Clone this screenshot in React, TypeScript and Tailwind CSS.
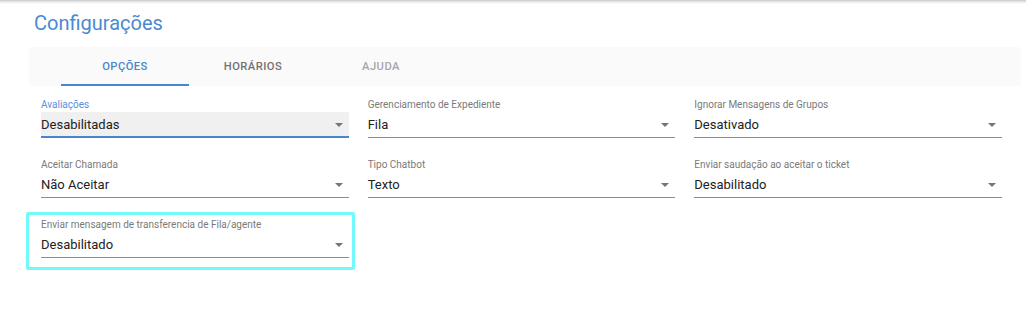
import React from "react";

type FieldProps = {
  label: string;
  value: string;
  focused?: boolean;
  highlighted?: boolean;
};

function Arrow() {
  return (
    <svg width="8" height="4" viewBox="0 0 8 4" className="shrink-0">
      <path d="M0 0 L8 0 L4 4 Z" fill="#757575" />
    </svg>
  );
}

function Field({ label, value, focused, highlighted }: FieldProps) {
  return (
    <div className="relative flex flex-col">
      {highlighted && (
        <div className="absolute -left-[15px] -right-[6px] -top-[7px] -bottom-[12px] border-[3px] border-[#72fafa] rounded-[2px] pointer-events-none" />
      )}
      <div
        className={
          "text-[10px] leading-[12px] " +
          (focused ? "text-[#5b8fdc]" : "text-[#7a7a7a]")
        }
      >
        {label}
      </div>
      <div
        className={
          "mt-[1px] h-[25px] flex items-center justify-between pr-[6px] " +
          (focused ? "bg-[#f0f0f0]" : "")
        }
      >
        <span className="text-[13px] text-[#222222] leading-[16px]">{value}</span>
        <Arrow />
      </div>
      {focused ? (
        <div className="h-[2px] -mt-[1px] bg-[#4a86cf]" />
      ) : (
        <div className="h-[1px] bg-[#8c8c8c]" />
      )}
    </div>
  );
}

export default function App() {
  return (
    <div
      className="relative w-full h-[333px] bg-white overflow-hidden"
      style={{ fontFamily: "Roboto, 'Noto Sans', sans-serif" }}
    >
      <div className="absolute top-0 left-0 right-0 h-[4px] bg-gradient-to-b from-[#c8c8c8] via-[#ececec] to-white" />
      <div className="pt-[11px] pl-[34px] text-[20px] leading-[24px] text-[#4a8ad2]">
        Configurações
      </div>
      <div className="mt-[12px] ml-[29px] mr-[5px] h-[39px] bg-[#fafafa] rounded-[3px] flex pl-[32px]">
        <div className="relative w-[128px] flex items-center justify-center pt-[1px] text-[11.2px] font-medium tracking-[0.04em] text-[#4a86cf]">
          OPÇÕES
          <div className="absolute left-0 right-0 bottom-0 h-[2px] bg-[#4a86cf]" />
        </div>
        <div className="w-[128px] flex items-center justify-center pt-[1px] text-[11.2px] font-medium tracking-[0.04em] text-[#727272]">
          HORÁRIOS
        </div>
        <div className="w-[128px] flex items-center justify-center pt-[1px] text-[11.2px] font-medium tracking-[0.04em] text-[#a6a6a6]">
          AJUDA
        </div>
      </div>
      <div className="mt-[13px] ml-[41px] w-[961px] grid grid-cols-3 gap-x-[19px] gap-y-[21px]">
        <Field label="Avaliações" value="Desabilitadas" focused />
        <Field label="Gerenciamento de Expediente" value="Fila" />
        <Field label="Ignorar Mensagens de Grupos" value="Desativado" />
        <Field label="Aceitar Chamada" value="Não Aceitar" />
        <Field label="Tipo Chatbot" value="Texto" />
        <Field label="Enviar saudação ao aceitar o ticket" value="Desabilitado" />
        <Field
          label="Enviar mensagem de transferencia de Fila/agente"
          value="Desabilitado"
          highlighted
        />
      </div>
    </div>
  );
}
